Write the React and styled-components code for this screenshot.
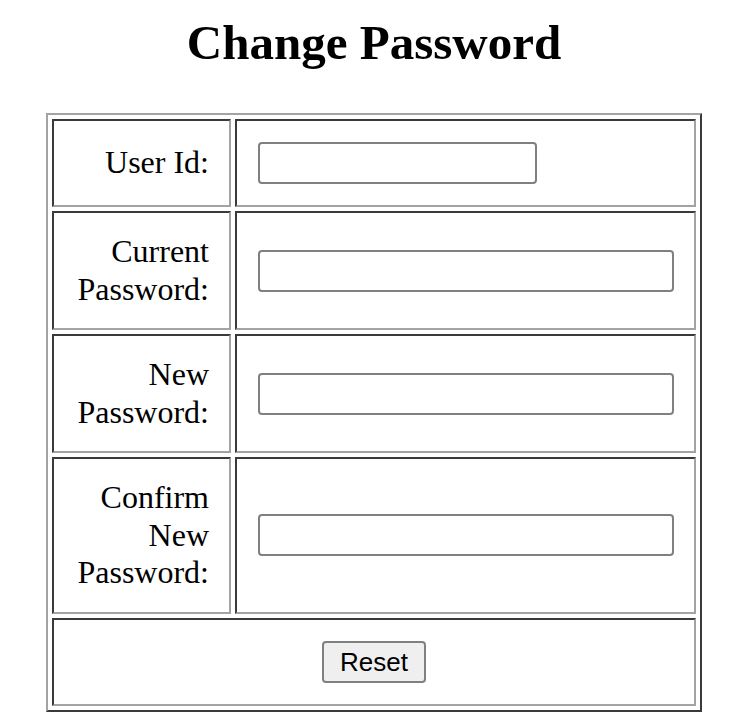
import React from "react";
import styled, { createGlobalStyle } from "styled-components";

const Global = createGlobalStyle`
  html, body { margin: 0; padding: 0; background: #ffffff; }
  body { font-family: "Liberation Serif", "Times New Roman", serif; color: #000; }
`;

const Page = styled.div`
  display: flex;
  flex-direction: column;
  align-items: center;
  padding-left: 4px;
`;

const Title = styled.h1`
  margin: 16px 0 43px;
  font-size: 49px;
  line-height: 54px;
  font-weight: bold;
`;

const Table = styled.table`
  width: 656px;
  border-spacing: 4px;
  border-collapse: separate;
  border: 2px solid;
  border-color: #a3a3a3 #3a3a3a #3a3a3a #a3a3a3;
`;

const Cell = styled.td`
  border: 2px solid;
  border-color: #3a3a3a #a3a3a3 #a3a3a3 #3a3a3a;
  padding: 20px;
  vertical-align: middle;
  font-size: 32px;
  line-height: 37.5px;
  text-align: ${(p) => p.$align || "left"};
  width: ${(p) => p.$w || "auto"};
  box-sizing: border-box;
`;

const Holder = styled.div`
  display: flex;
  align-items: center;
  justify-content: ${(p) => (p.$center ? "center" : "flex-start")};
`;

const Field = styled.input`
  box-sizing: border-box;
  width: ${(p) => p.$w}px;
  height: 42px;
  margin: 1px 0 1px 1px;
  border: 2px solid #808080;
  border-radius: 4px;
  background: #fff;
  outline: none;
  padding: 2px 6px;
  font-size: 20px;
`;

const Button = styled.button`
  box-sizing: border-box;
  width: 104px;
  height: 42px;
  margin: 1px 0;
  border: 2px solid #808080;
  border-radius: 4px;
  background: #efefef;
  color: #000;
  font-family: "Liberation Sans", Arial, sans-serif;
  font-size: 26px;
  line-height: 1;
  padding: 0;
`;

const rows = [
  { label: "User Id:", type: "text", w: 279 },
  { label: "Current Password:", type: "password", w: 416 },
  { label: "New Password:", type: "password", w: 416 },
  { label: "Confirm New Password:", type: "password", w: 416 },
];

export default function App() {
  return (
    <>
      <Global />
      <Page>
        <Title>Change Password</Title>
        <Table>
          <tbody>
            {rows.map((r) => (
              <tr key={r.label}>
                <Cell $align="right" $w="179px">{r.label}</Cell>
                <Cell $w="461px">
                  <Holder>
                    <Field type={r.type} $w={r.w} />
                  </Holder>
                </Cell>
              </tr>
            ))}
            <tr>
              <Cell colSpan={2}>
                <Holder $center>
                  <Button type="reset">Reset</Button>
                </Holder>
              </Cell>
            </tr>
          </tbody>
        </Table>
      </Page>
    </>
  );
}
